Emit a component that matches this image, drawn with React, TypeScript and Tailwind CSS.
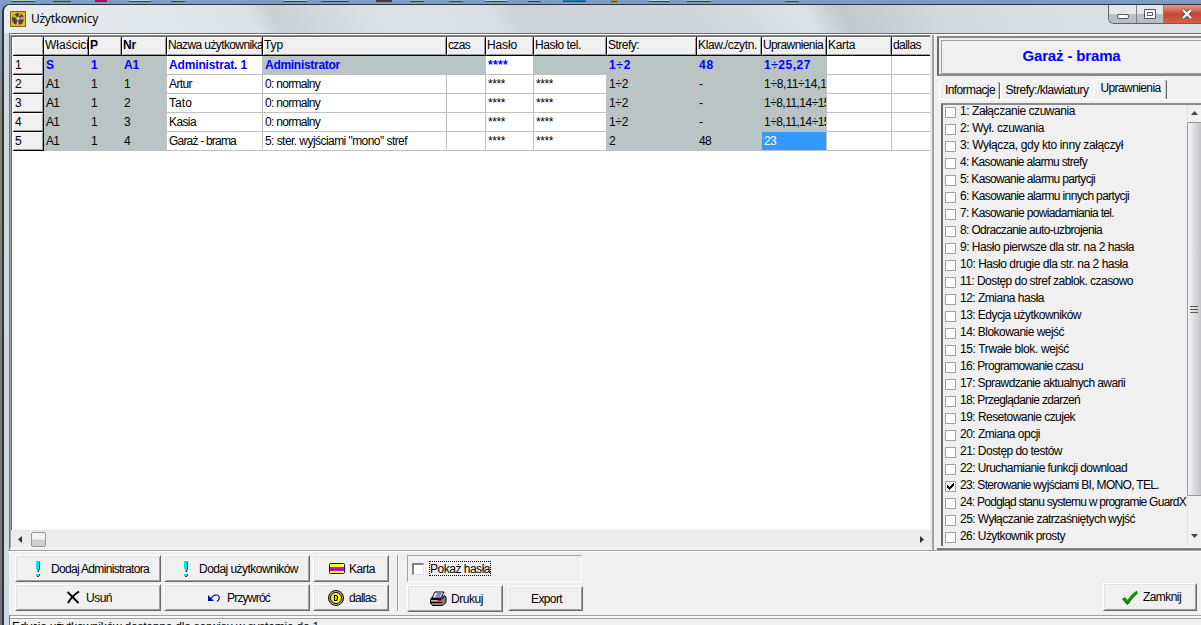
import { useLayoutEffect, useRef } from "react";
import type { ReactNode } from "react";
import clsx from "clsx";

type LabelProps = { text: string; width: number; className?: string };

// Spreads the letters so the label takes the given width.
const Label = ({ text, width, className }: LabelProps) => {
  const ref = useRef<HTMLSpanElement>(null);

  useLayoutEffect(() => {
    const el = ref.current;
    if (!el) return;
    el.style.letterSpacing = "0px";
    const natural = el.getBoundingClientRect().width;
    el.style.letterSpacing = `${(width - natural) / text.length}px`;
  }, [text, width]);

  return (
    <span ref={ref} className={clsx("inline-block shrink-0 whitespace-pre", className)}>
      {text}
    </span>
  );
};

const columns: [string, number][] = [
  ["Właścici", 44],
  ["P", 8],
  ["Nr", 13],
  ["Nazwa użytkownika", 95],
  ["Typ", 19],
  ["czas", 22],
  ["Hasło", 30],
  ["Hasło tel.", 46],
  ["Strefy:", 31],
  ["Klaw./czytn.", 59],
  ["Uprawnienia", 60],
  ["Karta", 27],
  ["dallas", 28],
];

const gridCols =
  "grid grid-cols-[31px_45px_33px_45px_96px_184px_39px_48px_73px_90px_65px_65px_65px_39px]";

const stars: [string, number] = ["****", 17];

const rows: [string, number][][] = [
  [["S", 8], ["1", 7], ["A1", 15], ["Administrat. 1", 78], ["Administrator", 75], ["", 0], ["****", 20], ["", 0], ["1÷2", 22], ["48", 15], ["1÷25,27", 47], ["", 0], ["", 0]],
  [["A1", 13], ["1", 6], ["1", 6], ["Artur", 23], ["0: normalny", 55], ["", 0], stars, stars, ["1÷2", 19], ["-", 4], ["1÷8,11÷14,16", 69], ["", 0], ["", 0]],
  [["A1", 13], ["1", 6], ["2", 6], ["Tato", 23], ["0: normalny", 55], ["", 0], stars, stars, ["1÷2", 19], ["-", 4], ["1÷8,11,14÷15", 66], ["", 0], ["", 0]],
  [["A1", 13], ["1", 6], ["3", 6], ["Kasia", 27], ["0: normalny", 55], ["", 0], stars, stars, ["1÷2", 19], ["-", 4], ["1÷8,11,14÷15", 66], ["", 0], ["", 0]],
  [["A1", 13], ["1", 6], ["4", 6], ["Garaż - brama", 67], ['5: ster. wyjściami "mono" stref', 142], ["", 0], stars, stars, ["2", 6], ["48", 12], ["23", 12], ["", 0], ["", 0]],
];

const cellColor = (row: number, col: number) => {
  if (row === 4 && col === 10) return "bg-[#3399ff] text-white";
  if (col < 3 || (col > 7 && col < 11)) return "bg-[#b9c5c5]";
  if (row === 0 && (col === 4 || col === 5 || col === 7)) return "bg-[#b9c5c5]";
  return "bg-white";
};

const rights: [string, number][] = [
  ["1: Załączanie czuwania", 115],
  ["2: Wył. czuwania", 84],
  ["3: Wyłącza, gdy kto inny załączył", 163],
  ["4: Kasowanie alarmu strefy", 127],
  ["5: Kasowanie alarmu partycji", 135],
  ["6: Kasowanie alarmu innych partycji", 169],
  ["7: Kasowanie powiadamiania tel.", 154],
  ["8: Odraczanie auto-uzbrojenia", 142],
  ["9: Hasło pierwsze dla str. na 2 hasła", 174],
  ["10: Hasło drugie dla str. na 2 hasła", 168],
  ["11: Dostęp do stref zablok. czasowo", 173],
  ["12: Zmiana hasła", 84],
  ["13: Edycja użytkowników", 121],
  ["14: Blokowanie wejść", 104],
  ["15: Trwałe blok. wejść", 109],
  ["16: Programowanie czasu", 123],
  ["17: Sprawdzanie aktualnych awarii", 165],
  ["18: Przeglądanie zdarzeń", 120],
  ["19: Resetowanie czujek", 115],
  ["20: Zmiana opcji", 80],
  ["21: Dostęp do testów", 102],
  ["22: Uruchamianie funkcji download", 167],
  ["23: Sterowanie wyjściami BI, MONO, TEL.", 199],
  ["24: Podgląd stanu systemu w programie GuardX", 226],
  ["25: Wyłączanie zatrzaśniętych wyjść", 175],
  ["26: Użytkownik prosty", 105],
];

const headBevel = "shadow-[inset_1px_1px_#fff,inset_-1px_-1px_#a0a0a0]";

const UsersGrid = () => (
  <div className="flex h-[513px] w-[921px] flex-col border border-[#a0a0a0] border-t-[#8a8a8a] border-r-[#e3e3e3] border-b-0 bg-white">
    <div className="flex-1 overflow-hidden border-t border-l border-[#696969] pl-px">
      <div className={clsx(gridCols, "h-[19px] w-[918px]")}>
        <div className={clsx("border-r border-b border-black bg-[#f0f0f0]", headBevel)} />
        {columns.map(([text, width], i) => (
          <div
            key={text}
            className={clsx(
              "overflow-hidden border-r border-b border-black bg-[#f0f0f0] pl-px leading-[16px]",
              headBevel,
              (i === 1 || i === 2) && "pl-0.5 font-bold",
              i === 12 && "border-r-0",
            )}
          >
            <Label text={text} width={width} />
          </div>
        ))}
      </div>
      {rows.map((cells, r) => (
        <div key={r} className={clsx(gridCols, "h-[19px] w-[918px]")}>
          <div className={clsx("border-r border-b border-black bg-[#f0f0f0] pl-0.5 leading-[18px]", headBevel)}>
            {r + 1}
          </div>
          {cells.map(([text, width], c) => (
            <div
              key={c}
              className={clsx(
                "overflow-hidden border-r border-b border-[#c0c0c0] pl-0.5 leading-[18px]",
                cellColor(r, c),
                r === 0 && "font-bold text-[#0000ff]",
                c === 12 && "border-r-0",
              )}
            >
              {text && <Label text={text} width={width} />}
            </div>
          ))}
        </div>
      ))}
    </div>
    <div className="flex h-[17px] shrink-0 items-center border-t border-[#e3e3e3] bg-[#ececec] pr-1.5 pl-[7px]">
      <svg className="h-[7px] w-1" viewBox="0 0 4 7">
        <path d="M4 0v7L0 3.5z" fill="#333" />
      </svg>
      <div className="ml-[9px] h-[15px] w-[15px] rounded-xs border border-[#979797] bg-linear-to-b from-[#f4f4f4] from-45% to-[#cfcfcf] to-55%" />
      <svg className="ml-auto h-[7px] w-1" viewBox="0 0 4 7">
        <path d="M0 0v7L4 3.5z" fill="#333" />
      </svg>
    </div>
    <div className="h-px shrink-0 bg-[#f7f7f7]" />
  </div>
);

const Tab = ({ text, width, className }: LabelProps) => (
  <div
    className={clsx(
      "flex justify-center rounded-t-xs border-t border-l border-white bg-[#f0f0f0] shadow-[inset_-1px_0_#696969,inset_-2px_0_#c8c8c8]",
      className,
    )}
  >
    <Label text={text} width={width} />
  </div>
);

const RightsPanel = () => (
  <div className="mt-px flex h-[514px] w-[266px] flex-col border-b-2 border-[#7d7d7d] bg-[#f0f0f0]">
    <div className="h-[40px] border-t-2 border-b-2 border-l-2 border-[#696969] border-t-[#8a8a8a] border-b-[#8a8a8a] p-0.5 pr-0 pb-0">
      <div className="flex h-[34px] items-center justify-center border border-r-0 border-[#a0a0a0] pb-0.5 text-[15px] font-bold text-[#0000ff]">
        <Label text="Garaż - brama" width={98} />
      </div>
    </div>
    <div className="flex h-[23px] items-end pl-0.5">
      <Tab text="Informacje" width={50} className="h-[18px] w-[61px] leading-[17px]" />
      <Tab text="Strefy:/klawiatury" width={83} className="h-[18px] w-[93px] leading-[17px] shadow-none" />
      <Tab text="Uprawnienia" width={60} className="h-[20px] w-[74px] leading-[17px]" />
    </div>
    <div className="border-t border-white" />
    <div className="mt-[3px] ml-[4px] flex h-[443px] border-t-2 border-l-2 border-[#696969] border-t-[#8a8a8a]">
      <div className="flex-1 overflow-hidden">
        {rights.map(([text, width], i) => (
          <div key={text} className="flex h-[17px] pl-0.5">
            <div className="mt-0.5 h-[11px] w-[11px] border border-[#a0a0a0] bg-white">
              {i === 22 && (
                <svg className="h-[9px] w-[9px]" viewBox="0 0 9 9" shapeRendering="crispEdges">
                  <path d="M1 3h1v1h1v1h1V4h1V3h1V2h1V1h1v3H7v1H6v1H5v1H4v1H3V7H2V6H1z" fill="#000" />
                </svg>
              )}
            </div>
            <Label text={text} width={width} className="ml-[4px] leading-[13px]" />
          </div>
        ))}
      </div>
      <div className="flex w-[14px] shrink-0 flex-col bg-[#f0f0f0] shadow-[inset_1px_0_#e0e0e0]">
        <svg className="mt-1.5 mb-[7px] ml-1 h-1 w-2" viewBox="0 0 8 4">
          <path d="M0 4h7L3.5 0z" fill="#444" />
        </svg>
        <div className="flex h-[374px] items-center border border-r-0 border-[#979797] bg-linear-to-r from-[#f5f5f5] to-[#c4c4c8] pl-0.5">
          <div className="flex w-2 flex-col gap-0.5">
            <i className="h-px bg-[#555]" />
            <i className="h-px bg-[#555]" />
            <i className="h-px bg-[#555]" />
          </div>
        </div>
        <svg className="mt-auto mb-2 ml-1 h-1 w-2" viewBox="0 0 8 4">
          <path d="M0 0h7L3.5 4z" fill="#444" />
        </svg>
      </div>
    </div>
  </div>
);

type ButtonProps = LabelProps & { children?: ReactNode };

const Button = ({ text, width, className, children }: ButtonProps) => (
  <button
    className={clsx(
      "flex items-center border-t border-r border-b border-l border-t-white border-r-[#696969] border-b-[#696969] border-l-white bg-[#f0f0f0] shadow-[inset_1px_1px_#e3e3e3,inset_-1px_-1px_#a0a0a0]",
      className,
    )}
  >
    {children}
    <Label text={text} width={width} className="ml-auto" />
  </button>
);

const Exclamation = () => (
  <svg className="h-4 w-[6px]" viewBox="0 0 6 16" shapeRendering="crispEdges">
    <path d="M1 0h4v8H4v3H2V8H1zM1 13h4v2H1z" fill="#00e5e5" />
    <path d="M4 1h1v8H4v2H3V9h1zM2 15h2v1H2zM4 13h1v2H4z" fill="#004a4a" />
  </svg>
);

const Cross = () => (
  <svg className="h-[13px] w-[13px]" viewBox="0 0 13 13">
    <path d="M.5 1 11.5 12M12 .5Q5 5 1 12" fill="none" stroke="#000" strokeWidth="1.9" />
  </svg>
);

const Undo = () => (
  <svg className="h-[8px] w-3" viewBox="0 0 12 8">
    <path d="M0 1v6h6z" fill="#0000a8" />
    <path d="M3 4.5Q5 1 8 1q3.300 0 3.300 3Q11.300 6 9 7.500" fill="none" stroke="#0000a8" strokeWidth="1.200" />
  </svg>
);

const Card = () => (
  <svg className="h-[11px] w-4" viewBox="0 0 16 11">
    <rect x=".5" y=".5" width="15" height="10" rx="1" fill="#ffff20" stroke="#0000c8" />
    <path d="M1 4h14v4H1z" fill="#b71cb7" />
    <path d="M2 6.500h12" stroke="#7a1490" strokeDasharray="2 1" />
  </svg>
);

const Coin = () => (
  <svg className="h-4 w-4" viewBox="0 0 16 16">
    <circle cx="8" cy="8" r="7.500" fill="#b0b0a0" stroke="#000" />
    <circle cx="8" cy="8" r="5.500" fill="#ffff00" stroke="#000" />
    <path d="M6.500 5.500v5H8q1.500 0 1.500-2.500T8 5.500z" fill="none" stroke="#000" strokeWidth="1.200" />
  </svg>
);

const Printer = () => (
  <svg className="h-[15px] w-[17px]" viewBox="0 0 17 15">
    <path d="M5 1h9l-3 6H2z" fill="#fff" stroke="#000" />
    <path d="M6.500 3h5M5.500 5h5" stroke="#0000d0" />
    <path d="M2.500 6 .5 8.500V12l2 2.500h10l3.500-3V6l-2-1.500L11 7.500H2z" fill="#808080" stroke="#000" />
    <path d="M1 8.500h10.500l3-3M1 11.500h11" fill="none" stroke="#000" />
    <path d="M1.500 9.500h6" stroke="#c0c0c0" />
    <path d="M8 9.500h3" stroke="#f00" strokeWidth="1.500" />
  </svg>
);

const Tick = () => (
  <svg className="h-[15px] w-4" viewBox="0 0 16 15">
    <path d="M.5 8.500 3 7l2.500 3Q9 4 15 .5L15.500 3Q10 7.500 5.500 14.500 3 12 .5 8.500z" fill="#00a000" />
    <path d="M.5 9 5.500 14.500Q10 7.500 15.500 3" fill="none" stroke="#004800" />
  </svg>
);

const Toolbar = () => (
  <div className="flex h-[64px] shrink-0 items-start border-t border-white bg-[#f0f0f0] pt-[3px] pl-[5px]">
    <div className="ml-px grid grid-cols-[146px_146px_76px] grid-rows-[27px_27px] gap-x-[3px] gap-y-0.5">
      <Button text="Dodaj Administratora" width={98} className="pr-[11px] pl-[19px]">
        <Exclamation />
      </Button>
      <Button text="Dodaj użytkowników" width={99} className="pr-[11px] pl-[18px]">
        <Exclamation />
      </Button>
      <Button text="Karta" width={26} className="pr-[13px] pl-[15px]">
        <Card />
      </Button>
      <Button text="Usuń" width={26} className="pr-[48px] pl-[51px]">
        <Cross />
      </Button>
      <Button text="Przywróć" width={43} className="pr-[39px] pl-[43px]">
        <Undo />
      </Button>
      <Button text="dallas" width={27} className="pr-[12px] pl-[14px]">
        <Coin />
      </Button>
    </div>
    <div className="mr-2 ml-[8px] h-[56px] w-0.5 border-r border-l border-r-white border-l-[#a0a0a0]" />
    <div>
      <label className="flex h-[27px] w-[175px] items-center border border-t-[#a0a0a0] border-r-white border-b-white border-l-[#a0a0a0] pl-1">
        <span className="h-3 w-3 border-t-2 border-r border-b border-l-2 border-t-[#808080] border-r-[#e3e3e3] border-b-[#e3e3e3] border-l-[#808080] bg-white" />
        <span className="ml-[5px] flex h-[15px] items-center border border-dotted border-black">
          <Label text="Pokaż hasła" width={60} />
        </span>
      </label>
      <div className="mt-[3px] flex gap-[5px]">
        <Button text="Drukuj" width={32} className="h-[27px] w-24 pr-[19px] pl-[22px]">
          <Printer />
        </Button>
        <Button text="Export" width={31} className="mt-px h-[25px] w-[75px] pr-[20px]" />
      </div>
    </div>
    <Button text="Zamknij" width={38} className="mt-[28px] mr-[4px] ml-auto h-[28px] w-[94px] pr-[15px] pl-[18px]">
      <Tick />
    </Button>
  </div>
);

const TitleBar = () => (
  <div className="flex h-[28px] items-start bg-[linear-gradient(60deg,#e9edf0_0%,#dde2e6_21%,#cbd0d5_23%,#dbe1e5_32%,#d8dfe4_41%,#cdd3da_43%,#d1d5dd_58%,#dbe1e5_67%,#c2c8cc_70%,#d5dade_79%,#dce2e6_100%)] pl-1.5">
    <svg className="mt-1.5 h-4 w-4" viewBox="0 0 16 16">
      <path d="M.5.5h15v15H.5z" fill="#e8b923" stroke="#7a6420" />
      <circle cx="8" cy="8" r="6" fill="#4a463c" />
      <path d="M8 8 2.500 5.500 4.500 3zM8 8l5.500-2.500.5 3zM8 8l-2 6 3 .2zM8 8l1-6 2 .8z" fill="#d8b84a" />
      <circle cx="8" cy="7.500" r="1.500" fill="#d0d0c8" />
    </svg>
    <span className="mt-1.5 ml-[5px] font-['Noto_Sans','Open_Sans',sans-serif] text-[12px] leading-4">
      <Label text="Użytkownicy" width={67} />
    </span>
    <div className="ml-auto flex h-[19px] w-[93px] overflow-hidden rounded-bl-md border border-t-0 border-r-0 border-[#5f646b]">
      <div className="flex w-[28px] items-center justify-center border-r border-[#7d8288] bg-linear-to-b from-[#e5e8ea] from-50% to-[#b9bec3] to-50%">
        <i className="mt-1 h-[5px] w-3 rounded-xs border border-[#50506a] bg-white" />
      </div>
      <div className="flex w-[27px] items-center justify-center border-r border-[#7d8288] bg-linear-to-b from-[#e5e8ea] from-50% to-[#b9bec3] to-50%">
        <svg className="h-[10px] w-3" viewBox="0 0 12 10">
          <path d="M.5.5h11v9H.5zM3.500 3.500h5v3h-5z" fill="#fff" stroke="#50506a" />
        </svg>
      </div>
      <div className="flex flex-1 items-center bg-linear-to-b from-[#e59b8d] via-[#c64632] to-[#d4614b] pl-[17px]">
        <svg className="h-[10px] w-3" viewBox="0 0 12 10">
          <path d="M2 1l8 8M10 1 2 9" stroke="#50506a" strokeWidth="4" />
          <path d="M2 1l8 8M10 1 2 9" stroke="#fff" strokeWidth="2.200" />
        </svg>
      </div>
    </div>
  </div>
);

const desktopIcons = [
  "ml-[11px] w-6 bg-[#b9c9c5]",
  "ml-[18px] w-[18px] bg-[#929b9b]",
  "ml-6 w-3 bg-[#b01848]",
  "ml-[22px] w-[22px] bg-[#c8d2cd]",
  "ml-5 w-[14px] bg-[#a8b0ac]",
  "ml-[98px] w-6 bg-[#b9c9c5]",
  "ml-[14px] w-7 bg-[#98acd0]",
  "ml-[27px] w-4 bg-[#68302c]",
  "ml-[18px] w-[14px] bg-[#a8b0ac]",
  "ml-[25px] w-[14px] bg-[#a8b0ac]",
  "ml-[22px] w-[22px] bg-[#c8d2cd]",
  "ml-[21px] w-[13px] bg-[#98acd0]",
  "ml-[22px] w-[23px] bg-[#1c80b0]",
  "ml-[25px] w-[6px] bg-[#d09020]",
  "ml-[32px] w-[21px] bg-[#c8d2cd]",
  "ml-[17px] w-[24px] bg-[#a8c0c0]",
  "ml-[74px] w-[14px] bg-[#a8b0ac]",
];

export default function App() {
  return (
    <div className="flex h-[625px] w-[1201px] flex-col overflow-hidden bg-[#7d9cc4] font-['Liberation_Sans',Arial,sans-serif] text-[12px] text-black">
      <div className="flex h-1 shrink-0">
        {desktopIcons.map((icon, i) => (
          <i key={i} className={clsx("h-[2px] shrink-0 border-b border-[#23465a]", icon)} />
        ))}
      </div>
      <div className="flex flex-1">
        <div className="w-0.5 shrink-0 bg-linear-to-b from-[#7d9cc4] via-[#878269] via-20% to-[#70757a]" />
        <div className="w-[1199px] overflow-hidden rounded-tl-lg border-t border-l-2 border-[#30343a] bg-[#d0d8e0]">
          <TitleBar />
          <div className="ml-[5px] flex h-[592px] flex-col border-t border-l border-[#6d6f75] bg-[#f0f0f0]">
            <div className="flex h-[516px] shrink-0 border-t border-white">
              <UsersGrid />
              <div className="mr-[3px] h-[515px] w-[3px] shrink-0 border-r-2 border-[#a0a0a0] bg-[#f0f0f0]" />
              <RightsPanel />
            </div>
            <div className="h-px shrink-0 bg-[#a0a0a0]" />
            <div className="-ml-px shrink-0">
              <Toolbar />
            </div>
            <div className="h-[4px] shrink-0 border-t border-b border-[#a0a0a0] bg-[#f8f8f8]" />
            <div className="h-1.5 shrink-0 overflow-hidden pl-0.5 leading-[16px]">
              <Label text="Edycja użytkowników dostępna dla serwisu w systemie do 1" width={307} />
            </div>
          </div>
        </div>
      </div>
    </div>
  );
}
